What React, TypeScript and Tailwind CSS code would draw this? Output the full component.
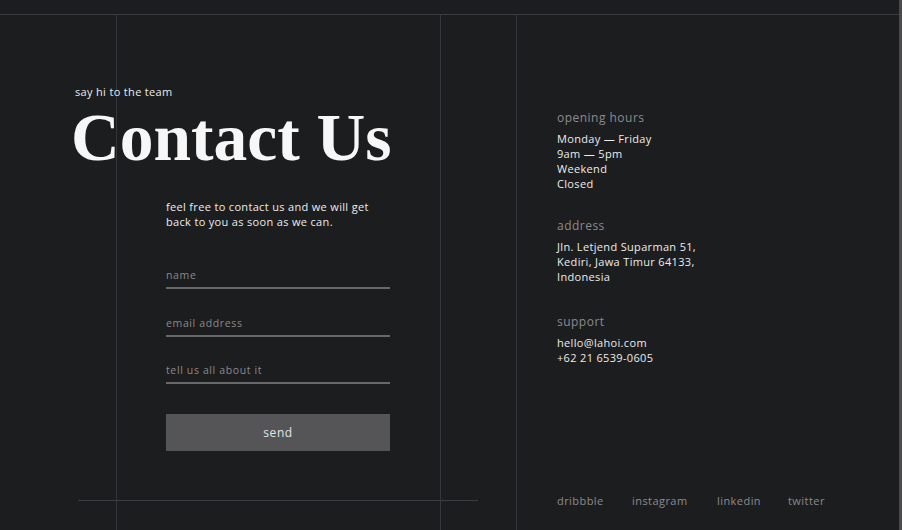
import React from 'react';

// Decorative grid lines behind the page
const GRID_X = [116, 440, 516];

const HOURS = ['Monday — Friday', '9am — 5pm', 'Weekend', 'Closed'];
const ADDRESS = ['Jln. Letjend Suparman 51,', 'Kediri, Jawa Timur 64133,', 'Indonesia'];
const SUPPORT = ['hello@lahoi.com', '+62 21 6539-0605'];
const SOCIALS = [
  { label: 'dribbble', w: 'w-[75px]' },
  { label: 'instagram', w: 'w-[85px]' },
  { label: 'linkedin', w: 'w-[71px]' },
  { label: 'twitter', w: 'w-[60px]' },
];

function InfoBlock({ title, lines }: { title: string; lines: string[] }) {
  return (
    <div>
      <h3 className="text-[12px] leading-4 tracking-[0.04em] text-[#8b8b8d]">{title}</h3>
      <ul className="mt-[5px] text-[11px] leading-[15px] tracking-[0.03em] text-[#ececec]">
        {lines.map(l => (
          <li key={l}>{l}</li>
        ))}
      </ul>
    </div>
  );
}

function Field({ label }: { label: string }) {
  return (
    <label className="block">
      <span className="block text-[10.5px] leading-3 tracking-[0.06em] text-[#8a8a8c]">{label}</span>
      <span className="mt-[6px] block h-[2px] bg-[#68686a]" />
    </label>
  );
}

export default function App() {
  return (
    <div className="flex h-[530px] w-[902px] overflow-hidden bg-[#1c1d1f] font-['Open_Sans','Noto_Sans',sans-serif] text-white">
      <div className="relative flex flex-1 flex-col">
        {/* ── top strip ─────────────────────── */}
        <div className="h-[15px] shrink-0 border-b border-[#3b3c3f]" />

        {/* ── grid lines ────────────────────── */}
        {GRID_X.map(x => (
          <span
            key={x}
            className="pointer-events-none absolute top-[15px] bottom-0 w-px bg-[#35363a]"
            style={{ left: x }}
          />
        ))}

        <div className="relative flex flex-1">
          {/* ── left: heading + form ──────────── */}
          <section className="flex w-[516px] shrink-0 flex-col">
            <p className="ml-[75px] mt-[71px] text-[11px] leading-3 tracking-[0.03em] text-[#eaeaea]">say hi to the team</p>
            <h1 className="ml-[71px] mt-[1px] font-['Liberation_Serif',serif] text-[67.5px] font-bold leading-[78px] text-[#f7f7f7]">
              Contact Us
            </h1>

            <div className="ml-[166px] mt-[22px] w-[224px]">
              <p className="text-[11px] leading-[15px] tracking-[0.03em] text-[#ececec]">
                feel free to contact us and we will get
                <br />
                back to you as soon as we can.
              </p>

              <form className="mt-[40px] flex flex-col gap-[27.5px]">
                <Field label="name" />
                <Field label="email address" />
                <Field label="tell us all about it" />
              </form>

              <button className="mt-[30px] flex h-[37px] w-full items-center justify-center bg-[#555557] text-[12px] tracking-[0.05em] text-[#e4e4e4]">
                send
              </button>
            </div>

            <div className="ml-[78px] mt-auto mb-[29px] h-px w-[400px] bg-[#3c3d40]" />
          </section>

          {/* ── right: info ───────────────────── */}
          <aside className="flex flex-1 flex-col pl-[41px]">
            <div className="mt-[95px] flex flex-col gap-[27px]">
              <InfoBlock title="opening hours" lines={HOURS} />
              <InfoBlock title="address" lines={ADDRESS} />
              <div className="mt-[3px]">
                <InfoBlock title="support" lines={SUPPORT} />
              </div>
            </div>

            <nav className="mt-auto mb-[21px] flex text-[11px] leading-4 tracking-[0.04em] text-[#8b8b8d]">
              {SOCIALS.map(s => (
                <a key={s.label} className={s.w}>
                  {s.label}
                </a>
              ))}
            </nav>
          </aside>
        </div>
      </div>
      <div className="w-[3px] shrink-0 bg-[#4a4a4c]" />
    </div>
  );
}
